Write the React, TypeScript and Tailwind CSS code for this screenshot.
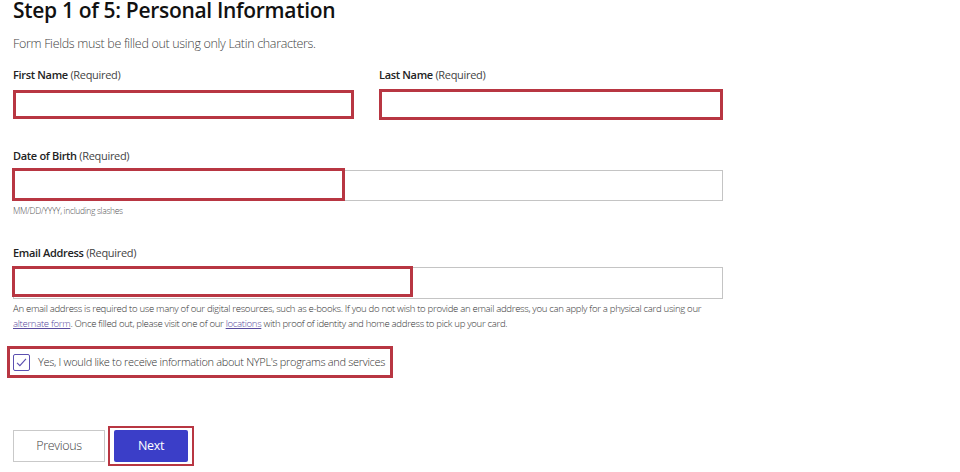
import { useState } from "react";

const font = { fontFamily: '"Open Sans", "Noto Sans", sans-serif' };

function Label({ name }: { name: string }) {
  return (
    <label className="block text-[11px] leading-[14px] text-[#222]">
      <span className="font-semibold">{name}</span> <span className="text-[#444]">(Required)</span>
    </label>
  );
}

// red annotation rectangle drawn over the field
function Mark({ className }: { className: string }) {
  return <div className={`pointer-events-none absolute border-[3px] border-[#b83642] ${className}`} />;
}

export default function App() {
  const [optIn, setOptIn] = useState(true);

  return (
    <div className="h-[472px] w-[960px] overflow-hidden bg-white pl-[13px] tracking-[-0.02em]" style={font}>
      <h1 className="text-[21px] font-semibold leading-[20px] text-[#111]">Step 1 of 5: Personal Information</h1>

      <p className="mt-[16px] text-[12.5px] leading-[16px] font-light text-[#444]">
        Form Fields must be filled out using only Latin characters.
      </p>

      <div className="mt-[16px] grid w-[710px] grid-cols-[341px_344px] gap-x-[25px]">
        <div>
          <Label name="First Name" />
          <input className="mt-[8px] block h-[29px] w-full border-[3px] border-[#b83642] outline-none" />
        </div>
        <div>
          <Label name="Last Name" />
          <input className="mt-[7px] block h-[31px] w-full border-[3px] border-[#b83642] outline-none" />
        </div>
      </div>

      <div className="mt-[29px] w-[710px]">
        <Label name="Date of Birth" />
        <div className="relative mt-[7px]">
          <input className="block h-[31px] w-full border border-[#c4c4c4] outline-none" />
          <Mark className="-left-[1px] -top-[2px] h-[33px] w-[333px]" />
        </div>
        <p className="mt-[4px] text-[8.5px] leading-[12px] font-light text-[#555]">MM/DD/YYYY, including slashes</p>
      </div>

      <div className="mt-[29px] w-[710px]">
        <Label name="Email Address" />
        <div className="relative mt-[7px]">
          <input className="block h-[32px] w-full border border-[#c4c4c4] outline-none" />
          <Mark className="-left-[1px] -top-[1px] h-[31px] w-[401px]" />
        </div>
        <div className="mt-[2px] text-[9.6px] leading-[15px] font-light whitespace-nowrap text-[#333]">
          <p>
            An email address is required to use many of our digital resources, such as e-books. If you do not wish to
            provide an email address, you can apply for a physical card using our
          </p>
          <p>
            <a href="#" className="text-[#5a4c9e] underline">
              alternate form
            </a>
            . Once filled out, please visit one of our{" "}
            <a href="#" className="text-[#5a4c9e] underline">
              locations
            </a>{" "}
            with proof of identity and home address to pick up your card.
          </p>
        </div>
      </div>

      <div className="relative mt-[15px] w-fit">
        <label className="flex h-[32px] cursor-pointer items-center gap-[8px] pr-[8px]">
          <input type="checkbox" checked={optIn} onChange={() => setOptIn(!optIn)} className="sr-only" />
          <span className="flex h-[17px] w-[17px] items-center justify-center rounded-[2px] border-[1.5px] border-[#5b4fb0] bg-white">
            {optIn && (
              <svg viewBox="0 0 16 16" className="h-[13px] w-[13px]" fill="none" stroke="#5b4fb0" strokeWidth="1.4">
                <path d="M2.5 8.5 L6 12 L13.5 3.5" />
              </svg>
            )}
          </span>
          <span className="text-[11px] font-light text-[#333]">
            Yes, I would like to receive information about NYPL's programs and services
          </span>
        </label>
        <Mark className="-left-[6px] top-0 h-[32px] w-[386px]" />
      </div>

      <div className="mt-[52px] flex gap-[9px]">
        <button className="h-[32px] w-[92px] border border-[#c9c9c9] bg-white text-[12.5px] font-light text-[#444]">
          Previous
        </button>
        <div className="relative">
          <button className="h-[32px] w-[74px] rounded-[2px] bg-[#3b3ec8] text-[12.5px] font-medium text-white">
            Next
          </button>
          <div className="pointer-events-none absolute -left-[6px] -top-[4px] h-[40px] w-[86px] border-[2px] border-[#b83642]" />
        </div>
      </div>
    </div>
  );
}
